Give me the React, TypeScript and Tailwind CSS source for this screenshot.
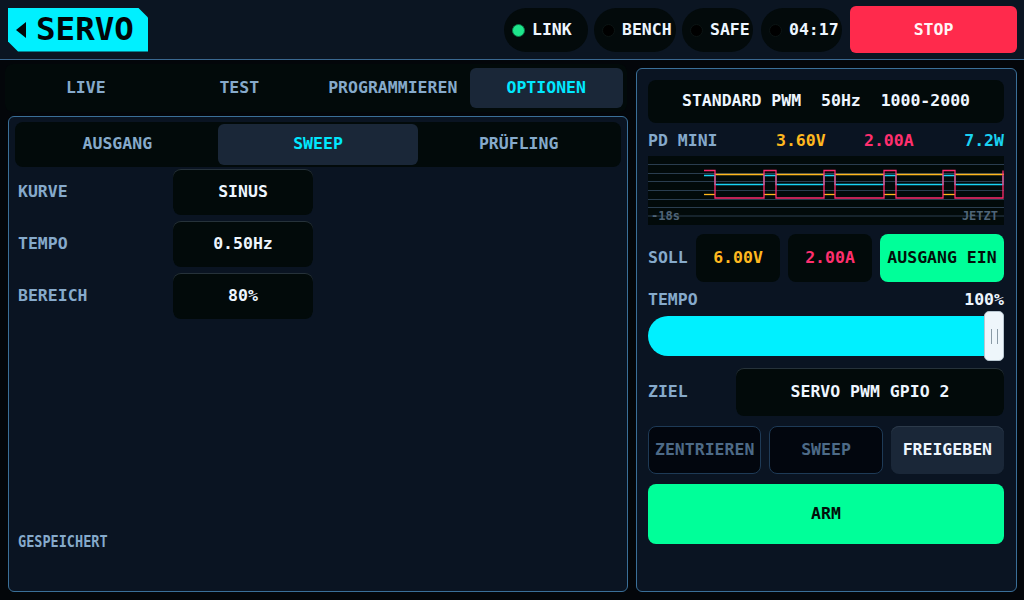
import React from "react";

const label = "text-[#86aacb]";
const white = "text-[#eef6ff]";

function Pill({ text, dot, width }: { text: string; dot: "on" | "off"; width: string }) {
  return (
    <div className={`flex h-[44px] ${width} items-center gap-[7px] rounded-full bg-[#030a0b] pl-2 pt-[2px]`}>
      <span
        className={
          dot === "on"
            ? "h-[13px] w-[13px] rounded-full border border-[#0c7a4a] bg-[#1ee68c]"
            : "h-[13px] w-[13px] rounded-full border border-[#0b1414] bg-black"
        }
      />
      <span className={white}>{text}</span>
    </div>
  );
}

function ValueRow({ name, value }: { name: string; value: string }) {
  return (
    <div className="flex items-center">
      <span className={`w-[164px] pl-[9px] ${label}`}>{name}</span>
      <div className={`flex h-[46px] w-[140px] items-center justify-center rounded-[8px] bg-[#020a0a] shadow-[inset_0_1px_0_#26323a] ${white}`}>
        {value}
      </div>
    </div>
  );
}

function Chart() {
  const xs = [56, 67, 116, 128, 176, 187, 236, 248, 295, 307, 355];
  const hi = 14.5;
  const lo = 42;
  let pink = `M56 ${hi}`;
  let cyan = `M56 19.5`;
  xs.slice(1).forEach((x, i) => {
    const up = i % 2 === 1;
    const py = i % 2 === 0 ? hi : lo;
    const ny = up ? hi : lo;
    pink += ` L${x} ${py} L${x} ${ny}`;
    const cy = i % 2 === 0 ? 19.5 : 28.5;
    const cn = up ? 19.5 : 28.5;
    cyan += ` L${x} ${cy} L${x} ${cn}`;
  });
  const amber: [number, number, number][] = [];
  for (let i = 0; i < xs.length - 1; i++) {
    amber.push([xs[i], xs[i + 1], i % 2 === 0 ? 38.5 : 18.5]);
  }
  amber.push([355, 356, 18.5]);
  const grid = [8.5, 17.5, 25.5, 34.5, 43.5, 51.5, 60];
  return (
    <div className="relative mt-1 h-[69px] w-full bg-[#020a0a]">
      <svg width="356" height="69" viewBox="0 0 356 69" className="block">
        {grid.map((y) => (
          <line key={y} x1="0" x2="356" y1={y} y2={y} stroke="#2a3d4f" strokeWidth="1" />
        ))}
        {amber.map(([a, b, y], i) => (
          <line key={i} x1={a} x2={b} y1={y} y2={y} stroke="#ffb71c" strokeWidth="1.3" />
        ))}
        <path d={cyan} fill="none" stroke="#18d4f5" strokeWidth="1.3" />
        <path d={pink} fill="none" stroke="#ff2d6f" strokeWidth="1.3" />
      </svg>
      <span className="absolute bottom-[3px] left-[3px] text-[12px] leading-none text-[#4f6478]">-18s</span>
      <span className="absolute bottom-[3px] right-[6px] text-[12px] leading-none text-[#4f6478]">JETZT</span>
    </div>
  );
}

export default function App() {
  return (
    <div className="flex h-[600px] w-[1024px] flex-col overflow-hidden bg-[#03060a] font-['DejaVu_Sans_Mono',monospace] text-[16.5px] font-bold">
      {/* header */}
      <div className="flex h-[60px] shrink-0 items-center border-b border-[#3a6890] bg-[#0b1522] pl-2 pr-[7px]">
        <div className="flex h-[44px] w-[140px] items-center gap-[10px] bg-[#00f0ff] pl-2 [clip-path:polygon(0_0,calc(100%-10px)_0,100%_10px,100%_100%,10px_100%,0_calc(100%-10px))]">
          <svg width="10" height="16" viewBox="0 0 10 16">
            <polygon points="10,0 0,8 10,16" fill="#020608" />
          </svg>
          <span className="text-[32.5px] leading-none text-[#020608]">SERVO</span>
        </div>
        <div className="ml-auto flex items-center">
          <Pill text="LINK" dot="on" width="w-[84px]" />
          <div className="ml-[6px]">
            <Pill text="BENCH" dot="off" width="w-[82px]" />
          </div>
          <div className="ml-[6px]">
            <Pill text="SAFE" dot="off" width="w-[71px]" />
          </div>
          <div className="ml-[8px]">
            <Pill text="04:17" dot="off" width="w-[81px]" />
          </div>
          <button className="ml-[8px] flex h-[47px] w-[167px] items-center justify-center rounded-[6px] bg-[#ff2a4c] pt-[2px] text-[#fff4f6]">
            STOP
          </button>
        </div>
      </div>

      {/* body */}
      <div className="flex flex-1">
        {/* left column */}
        <div className="flex w-[628px] flex-col pl-[5px]">
          <div className="mt-1 grid h-[48px] w-[622px] grid-cols-4 rounded-[8px] bg-[#020a0a] p-1">
            {["LIVE", "TEST", "PROGRAMMIEREN", "OPTIONEN"].map((t) => (
              <div
                key={t}
                className={
                  t === "OPTIONEN"
                    ? "flex items-center justify-center rounded-[6px] bg-[#1a2738] text-[#00e8ff]"
                    : `flex items-center justify-center ${label}`
                }
              >
                {t}
              </div>
            ))}
          </div>

          <div className="mt-1 ml-[3px] flex h-[476px] w-[620px] flex-col rounded-[6px] border border-[#3a6f98] bg-[#0a1422]">
            <div className="mx-[6px] mt-[5px] grid h-[45px] grid-cols-3 rounded-[8px] bg-[#020a0a] p-[2px]">
              {["AUSGANG", "SWEEP", "PRÜFLING"].map((t) => (
                <div
                  key={t}
                  className={
                    t === "SWEEP"
                      ? "flex items-center justify-center rounded-[6px] bg-[#1a2738] text-[#00e8ff]"
                      : `flex items-center justify-center ${label}`
                  }
                >
                  {t}
                </div>
              ))}
            </div>
            <div className="mt-[2px] flex flex-col gap-[6px]">
              <ValueRow name="KURVE" value="SINUS" />
              <ValueRow name="TEMPO" value="0.50Hz" />
              <ValueRow name="BEREICH" value="80%" />
            </div>
            <div className={`mt-auto mb-[36px] pl-[9px] ${label}`}>
              <span className="inline-block origin-left scale-x-[0.82]">GESPEICHERT</span>
            </div>
          </div>
        </div>

        {/* right panel */}
        <div className="mt-2 ml-2 flex h-[524px] w-[381px] flex-col rounded-[6px] border border-[#3a6f98] bg-[#0a1422] pt-[11px] pl-[11px] pr-[12px]">
          <div className={`flex h-[43px] items-center justify-center rounded-[8px] bg-[#020a0a] whitespace-pre ${white}`}>
            {"STANDARD PWM  50Hz  1000-2000"}
          </div>
          <div className="mt-[7px] flex h-[22px] items-center">
            <span className={`w-[128px] ${label}`}>PD MINI</span>
            <span className="w-[88px] text-[#ffb81f]">3.60V</span>
            <span className="text-[#ff2f6e]">2.00A</span>
            <span className="ml-auto text-[#1ad2f2]">7.2W</span>
          </div>
          <Chart />
          <div className="mt-[9px] flex h-[48px] items-center gap-2">
            <span className={`w-[40px] ${label}`}>SOLL</span>
            <div className="flex h-full w-[84px] items-center justify-center rounded-[8px] bg-[#020a0a] text-[#ffb81f]">6.00V</div>
            <div className="flex h-full w-[84px] items-center justify-center rounded-[8px] bg-[#020a0a] text-[#ff2f6e]">2.00A</div>
            <div className="flex h-full flex-1 items-center justify-center rounded-[8px] bg-[#00ff99] text-[#02100a]">AUSGANG EIN</div>
          </div>
          <div className="mt-[7px] flex h-[22px] items-center justify-between">
            <span className={label}>TEMPO</span>
            <span className={white}>100%</span>
          </div>
          <div className="relative mt-[5px] h-[40px] w-full rounded-full bg-[#00f0ff]">
            <div className="absolute top-[-5px] right-0 flex h-[50px] w-[20px] items-center justify-center gap-[5px] rounded-[5px] border border-[#b8c6d0] bg-[#eef6fb]">
              <span className="h-[15px] w-px bg-[#8a9aa6]" />
              <span className="h-[15px] w-px bg-[#8a9aa6]" />
            </div>
          </div>
          <div className="mt-3 flex h-[48px] items-center">
            <span className={`w-[88px] ${label}`}>ZIEL</span>
            <div className={`flex h-full flex-1 items-center justify-center rounded-[8px] bg-[#020a0a] shadow-[inset_0_1px_0_#26323a] ${white}`}>
              SERVO PWM GPIO 2
            </div>
          </div>
          <div className="mt-[10px] grid h-[48px] grid-cols-3 gap-2">
            <div className="flex items-center justify-center rounded-[8px] border border-[#1e3a56] bg-[#02060e] text-[#4d6a87]">ZENTRIEREN</div>
            <div className="flex items-center justify-center rounded-[8px] border border-[#1e3a56] bg-[#02060e] text-[#4d6a87]">SWEEP</div>
            <div className={`flex items-center justify-center rounded-[8px] bg-[#1a2738] shadow-[inset_0_1px_0_#2c3a4a] ${white}`}>FREIGEBEN</div>
          </div>
          <button className="mt-[10px] flex h-[60px] w-full items-center justify-center rounded-[8px] bg-[#00ff99] text-[#02100a]">
            ARM
          </button>
        </div>
      </div>
    </div>
  );
}
